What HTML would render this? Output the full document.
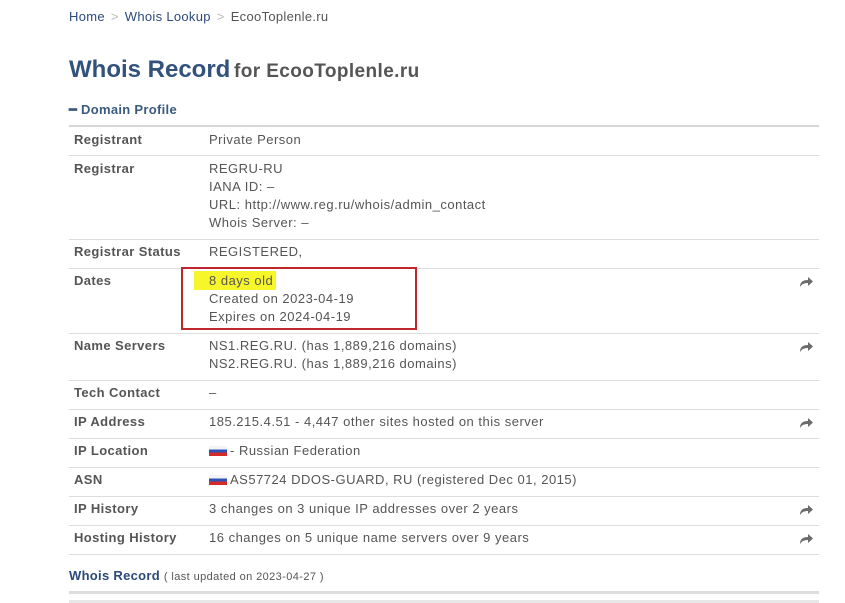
<!DOCTYPE html>
<html><head><meta charset="utf-8"><style>
body{margin:0;width:845px;height:603px;background:#fff;font-family:"Liberation Sans",sans-serif;color:#555;position:relative;overflow:hidden}
.a{position:absolute;white-space:nowrap}
.bc{top:8px;left:69px;font-size:13px;line-height:18px;letter-spacing:0.3px}
.bc a{color:#2b4a7a;text-decoration:none}
.bc span{color:#bbb;margin:0 6px}
h1{position:absolute;left:69px;top:53px;margin:0;font-size:24px;color:#32527b;font-weight:bold;white-space:nowrap;line-height:34px}
h1 small{font-size:19px;color:#555;letter-spacing:0.4px;margin-left:-3px}
.dp{left:69px;top:101px;font-size:13px;font-weight:bold;color:#3a5a80;line-height:18px;letter-spacing:0.3px}
.ln{position:absolute;left:69px;width:750px;height:1px;background:#ddd}
.l{left:74px;font-size:13px;font-weight:bold;color:#555;line-height:18px;letter-spacing:0.4px}
.v{left:209px;font-size:13px;color:#555;line-height:18px;letter-spacing:0.5px}
.ar{left:799px;width:14px;height:12px}
.flag{display:inline-block;width:18px;height:10px;vertical-align:-1px;margin-right:3px;background:linear-gradient(#f4f4f4 0 33%,#2d52b8 33% 66%,#d52a2a 66%)}
</style></head><body>
<div class="a bc"><a>Home</a><span>&gt;</span><a>Whois Lookup</a><span>&gt;</span>EcooToplenle.ru</div>
<h1>Whois Record <small>for EcooToplenle.ru</small></h1>
<div class="a dp">&#9473; Domain Profile</div>
<div class="ln" style="top:125px;height:2px;background:#d6d6d6"></div>
<div class="ln" style="top:155px"></div>
<div class="ln" style="top:239px"></div>
<div class="ln" style="top:268px"></div>
<div class="ln" style="top:333px"></div>
<div class="ln" style="top:380px"></div>
<div class="ln" style="top:409px"></div>
<div class="ln" style="top:438px"></div>
<div class="ln" style="top:467px"></div>
<div class="ln" style="top:496px"></div>
<div class="ln" style="top:525px"></div>
<div class="ln" style="top:554px"></div>

<div class="a l" style="top:131px">Registrant</div><div class="a v" style="top:131px">Private Person</div>
<div class="a l" style="top:160px">Registrar</div><div class="a v" style="top:160px">REGRU-RU<br>IANA ID: –<br>URL: http://www.reg.ru/whois/admin_contact<br>Whois Server: –</div>
<div class="a l" style="top:243px">Registrar Status</div><div class="a v" style="top:243px">REGISTERED,</div>
<div class="a" style="left:194px;top:271px;width:82px;height:19px;background:#f6f62a"></div>
<div class="a l" style="top:272px">Dates</div><div class="a v" style="top:272px">8 days old<br>Created on 2023-04-19<br>Expires on 2024-04-19</div>
<div class="a" style="left:181px;top:267px;width:232px;height:59px;border:2px solid #c0272d"></div>
<div class="a l" style="top:337px">Name Servers</div><div class="a v" style="top:337px">NS1.REG.RU. (has 1,889,216 domains)<br>NS2.REG.RU. (has 1,889,216 domains)</div>
<div class="a l" style="top:384px">Tech Contact</div><div class="a v" style="top:384px">–</div>
<div class="a l" style="top:413px">IP Address</div><div class="a v" style="top:413px">185.215.4.51 - 4,447 other sites hosted on this server</div>
<div class="a l" style="top:442px">IP Location</div><div class="a v" style="top:442px"><i class="flag"></i>- Russian Federation</div>
<div class="a l" style="top:471px">ASN</div><div class="a v" style="top:471px"><i class="flag"></i>AS57724 DDOS-GUARD, RU (registered Dec 01, 2015)</div>
<div class="a l" style="top:500px">IP History</div><div class="a v" style="top:500px">3 changes on 3 unique IP addresses over 2 years</div>
<div class="a l" style="top:529px">Hosting History</div><div class="a v" style="top:529px">16 changes on 5 unique name servers over 9 years</div>

<svg class="a ar" style="top:276px" viewBox="0 0 14 12"><path d="M1 11C1 6 4 4 9 4V1l5 4.5L9 10V7C5 7 3 8 1 11Z" fill="#6b6b6b"/></svg>
<svg class="a ar" style="top:341px" viewBox="0 0 14 12"><path d="M1 11C1 6 4 4 9 4V1l5 4.5L9 10V7C5 7 3 8 1 11Z" fill="#6b6b6b"/></svg>
<svg class="a ar" style="top:417px" viewBox="0 0 14 12"><path d="M1 11C1 6 4 4 9 4V1l5 4.5L9 10V7C5 7 3 8 1 11Z" fill="#6b6b6b"/></svg>
<svg class="a ar" style="top:504px" viewBox="0 0 14 12"><path d="M1 11C1 6 4 4 9 4V1l5 4.5L9 10V7C5 7 3 8 1 11Z" fill="#6b6b6b"/></svg>
<svg class="a ar" style="top:533px" viewBox="0 0 14 12"><path d="M1 11C1 6 4 4 9 4V1l5 4.5L9 10V7C5 7 3 8 1 11Z" fill="#6b6b6b"/></svg>

<div class="a" style="left:69px;top:567px;font-size:13px;line-height:18px;color:#2b4a7a;font-weight:bold;letter-spacing:0.3px">Whois Record <span style="font-size:11px;color:#555;font-weight:normal;letter-spacing:0.4px">( last updated on 2023-04-27 )</span></div>
<div class="ln" style="top:591px;height:3px;background:#ddd"></div>
<div class="ln" style="top:600px;height:3px;background:#e8e8e8"></div>
</body></html>
